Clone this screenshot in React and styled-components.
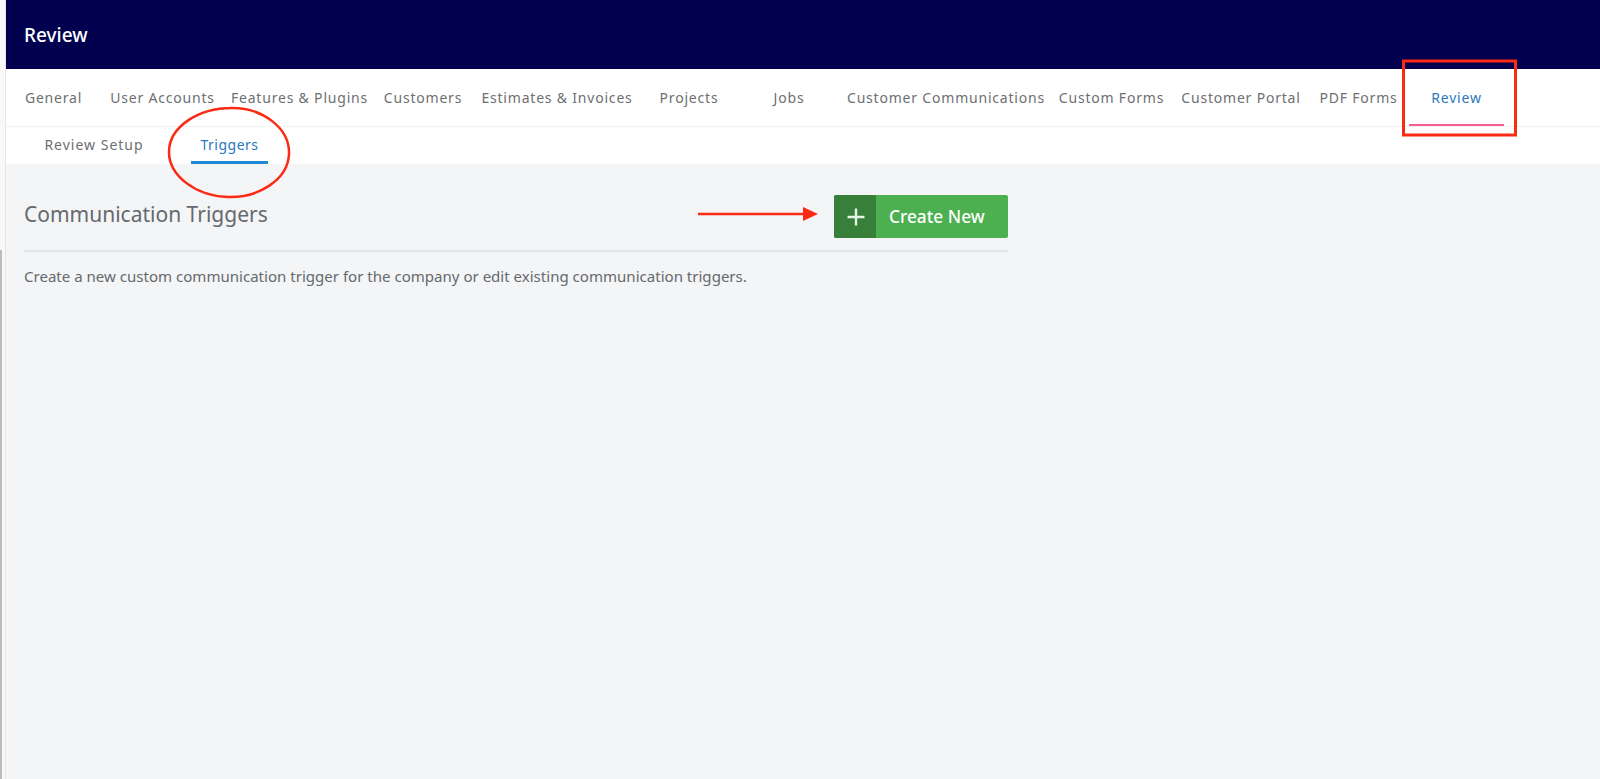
import React from 'react';
import styled, { createGlobalStyle } from 'styled-components';

const GlobalStyle = createGlobalStyle`
  html, body, #root { height: 100%; }
  body {
    margin: 0;
    font-family: 'Noto Sans', 'Liberation Sans', sans-serif;
    background: #fff;
    color: #666a6e;
    overflow: hidden;
  }
  * { box-sizing: border-box; }
`;

const Page = styled.div`
  position: relative;
  display: flex;
  height: 779px;
`;

const Gutter = styled.div`
  width: 6px;
  flex: none;
  padding-top: 250px;
  background: #f8f8f8;
  border-right: 1px solid #e6e6e6;
`;

const ScrollThumb = styled.div`
  width: 2px;
  height: 100%;
  background: #bcbcbc;
`;

const Main = styled.div`
  flex: 1;
  display: flex;
  flex-direction: column;
  min-width: 0;
`;

const Header = styled.header`
  height: 69px;
  flex: none;
  display: flex;
  align-items: center;
  padding: 0 18px;
  background: #00004f;
  color: #fff;
  font-size: 19px;
  font-weight: 500;
`;

const TabBar = styled.nav`
  height: 58px;
  flex: none;
  display: flex;
  background: #fff;
  border-bottom: 1px solid #f0f1f2;
`;

const Tab = styled.a`
  width: ${p => p.$width}px;
  flex: none;
  display: flex;
  align-items: center;
  justify-content: center;
  padding-top: 2px;
  font-size: 14px;
  letter-spacing: 0.8px;
  white-space: nowrap;
  color: ${p => (p.$active ? '#2a78bd' : '#6d6f72')};
  border-bottom: 2px solid ${p => (p.$active ? '#fb5a92' : 'transparent')};
`;

const SubBar = styled.nav`
  height: 37px;
  flex: none;
  display: flex;
  padding-left: 33px;
  background: #fff;
`;

const SubTab = styled.a`
  width: ${p => p.$width}px;
  margin-right: ${p => p.$gap || 0}px;
  flex: none;
  display: flex;
  align-items: center;
  justify-content: center;
  font-size: 14px;
  letter-spacing: ${p => (p.$active ? '0.5px' : '1px')};
  white-space: nowrap;
  color: ${p => (p.$active ? '#2a78bd' : '#6d6f72')};
  border-bottom: 3px solid ${p => (p.$active ? '#1e88d2' : 'transparent')};
`;

const Content = styled.main`
  flex: 1;
  padding: 31px 18px 0;
  background: #f3f5f7;
`;

const Column = styled.div`
  width: 984px;
`;

const TitleRow = styled.div`
  display: flex;
  justify-content: space-between;
  align-items: flex-start;
  height: 57px;
  border-bottom: 2px solid #e2e4e6;
`;

const Title = styled.h1`
  margin: 0;
  padding-top: 4px;
  font-size: 21px;
  line-height: 30px;
  font-weight: 400;
  color: #66696d;
`;

const CreateButton = styled.button`
  display: flex;
  width: 174px;
  height: 43px;
  padding: 0;
  border: 0;
  border-radius: 2px;
  overflow: hidden;
  background: #4caf50;
  color: #fff;
  font-family: inherit;
  font-size: 17.3px;
  font-weight: 500;
`;

const ButtonIcon = styled.span`
  width: 42px;
  flex: none;
  display: flex;
  align-items: center;
  justify-content: center;
  padding-left: 1px;
  background: #388039;
`;

const ButtonLabel = styled.span`
  flex: 1;
  display: flex;
  align-items: center;
  padding-left: 13px;
  white-space: nowrap;
`;

const Intro = styled.p`
  margin: 14px 0 0;
  font-size: 15.05px;
  line-height: 20px;
  white-space: nowrap;
  color: #66696d;
`;

const Markup = styled.svg`
  position: absolute;
  inset: 0;
  width: 1600px;
  height: 779px;
  pointer-events: none;
`;

const TABS = [
  ['General', 95],
  ['User Accounts', 123],
  ['Features & Plugins', 151],
  ['Customers', 96],
  ['Estimates & Invoices', 172],
  ['Projects', 92],
  ['Jobs', 108],
  ['Customer Communications', 206],
  ['Custom Forms', 125],
  ['Customer Portal', 134],
  ['PDF Forms', 101],
  ['Review', 95, true],
];

export default function App() {
  return (
    <>
      <GlobalStyle />
      <Page>
        <Gutter>
          <ScrollThumb />
        </Gutter>
        <Main>
          <Header>Review</Header>
          <TabBar>
            {TABS.map(([label, width, active]) => (
              <Tab key={label} $width={width} $active={active}>{label}</Tab>
            ))}
          </TabBar>
          <SubBar>
            <SubTab $width={110} $gap={42}>Review Setup</SubTab>
            <SubTab $width={77} $active>Triggers</SubTab>
          </SubBar>
          <Content>
            <Column>
              <TitleRow>
                <Title>Communication Triggers</Title>
                <CreateButton>
                  <ButtonIcon>
                    <svg width="20" height="20" viewBox="0 0 20 20">
                      <path d="M10 1.5v17M1.5 10h17" stroke="#e8f3e8" strokeWidth="2.4" fill="none" />
                    </svg>
                  </ButtonIcon>
                  <ButtonLabel>Create New</ButtonLabel>
                </CreateButton>
              </TitleRow>
              <Intro>Create a new custom communication trigger for the company or edit existing communication triggers.</Intro>
            </Column>
          </Content>
        </Main>

        {/* red annotations drawn over the screenshot */}
        <Markup viewBox="0 0 1600 779">
          <rect x="1403.5" y="61" width="112" height="74" fill="none" stroke="#fb2a14" strokeWidth="3" />
          <path
            d="M230 108 C 262 107 290 128 289 154 C 288 180 258 198 228 197 C 196 196 169 176 169 152 C 169 127 198 108 232 108"
            fill="none"
            stroke="#fb2a14"
            strokeWidth="2.5"
          />
          <path d="M698 214H805" stroke="#fb2a14" strokeWidth="2.5" fill="none" />
          <path d="M803 207L818 214L803 221Z" fill="#fb2a14" />
        </Markup>
      </Page>
    </>
  );
}
